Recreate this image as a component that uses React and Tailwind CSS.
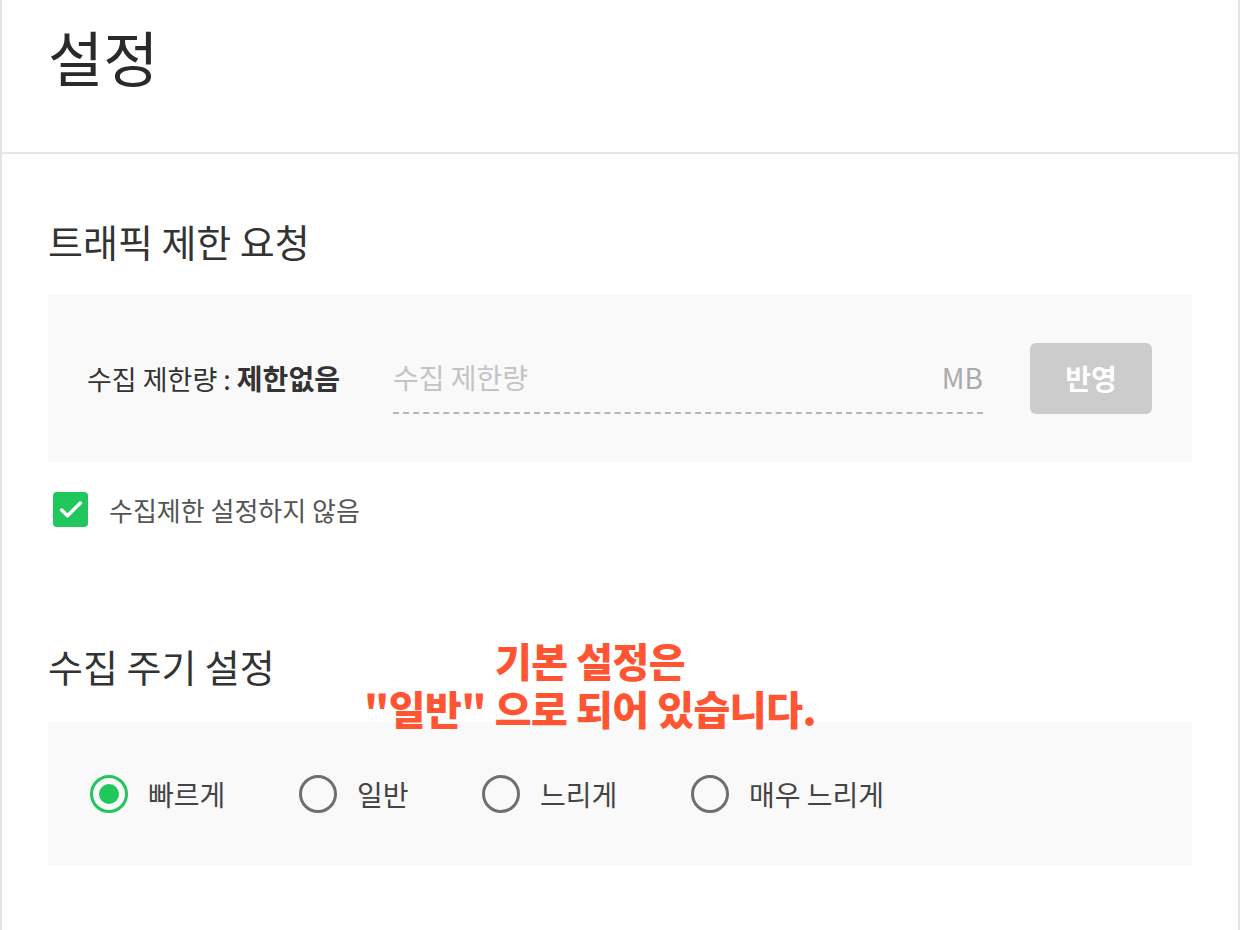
import { Check } from 'lucide-react';

const font = { fontFamily: '"Noto Sans CJK KR", "Noto Sans", sans-serif' };

const periods = ['빠르게', '일반', '느리게', '매우 느리게'];

function Radio({ checked, label, className }) {
  return (
    <label className={`flex items-center gap-[20px] ${className || ''}`}>
      <span
        className={`flex h-[38px] w-[38px] items-center justify-center rounded-full border-[3px] ${
          checked ? 'border-[#1fc75d]' : 'border-[#6f6f6f]'
        }`}
      >
        {checked && <span className="h-[20px] w-[20px] rounded-full bg-[#1fc75d]" />}
      </span>
      <span className="text-[28px] leading-none text-[#444]">{label}</span>
    </label>
  );
}

export default function App() {
  return (
    <div style={font} className="relative h-[930px] w-[1240px] overflow-hidden border-x-2 border-[#e3e3e3] bg-white">
      <header className="flex h-[154px] items-start border-b-2 border-[#e6e6e6] px-[46px] pt-[26px]">
        <h1 className="text-[60px] leading-none font-normal text-[#2a2a2a]">설정</h1>
      </header>

      <div className="px-[46px]">
        <h2 className="mt-[68px] text-[38px] leading-none text-[#333]">트래픽 제한 요청</h2>

        <div className="mt-[34px] flex h-[168px] items-center bg-[#f9f9f9] pr-[40px] pl-[39px]">
          <div className="w-[306px] text-[27px] leading-none text-[#333]">
            수집 제한량 : <span className="text-[28px] font-bold">제한없음</span>
          </div>
          <div className="flex h-[72px] w-[590px] items-center justify-between border-b-2 border-dashed border-[#b5b5b5]">
            <span className="text-[28px] text-[#c4c4c4]">수집 제한량</span>
            <span className="text-[28px] text-[#aaaaaa]">MB</span>
          </div>
          <button className="ml-auto flex h-[71px] w-[122px] items-center justify-center rounded-[6px] bg-[#cccccc] text-[28px] font-bold text-white">
            반영
          </button>
        </div>

        <div className="mt-[30px] flex items-center gap-[21px] pl-[5px]">
          <span className="flex h-[35px] w-[35px] items-center justify-center rounded-[4px] bg-[#1fc75d]">
            <Check size={28} strokeWidth={3} className="text-white" />
          </span>
          <span className="text-[26px] leading-none text-[#555]">수집제한 설정하지 않음</span>
        </div>

        <h2 className="mt-[120px] text-[38px] leading-none text-[#333]">수집 주기 설정</h2>

        <div className="mt-[37px] flex h-[144px] items-center bg-[#f9f9f9] pl-[42px]">
          <Radio checked label={periods[0]} className="w-[209px]" />
          <Radio label={periods[1]} className="w-[183px]" />
          <Radio label={periods[2]} className="w-[209px]" />
          <Radio label={periods[3]} />
        </div>
      </div>

      <div className="absolute top-[636px] left-[340px] w-[496px] text-center text-[40px] leading-[48px] font-black tracking-[-0.5px] text-[#ff5533]">
        기본 설정은
        <br />
        "일반" 으로 되어 있습니다.
      </div>
    </div>
  );
}
